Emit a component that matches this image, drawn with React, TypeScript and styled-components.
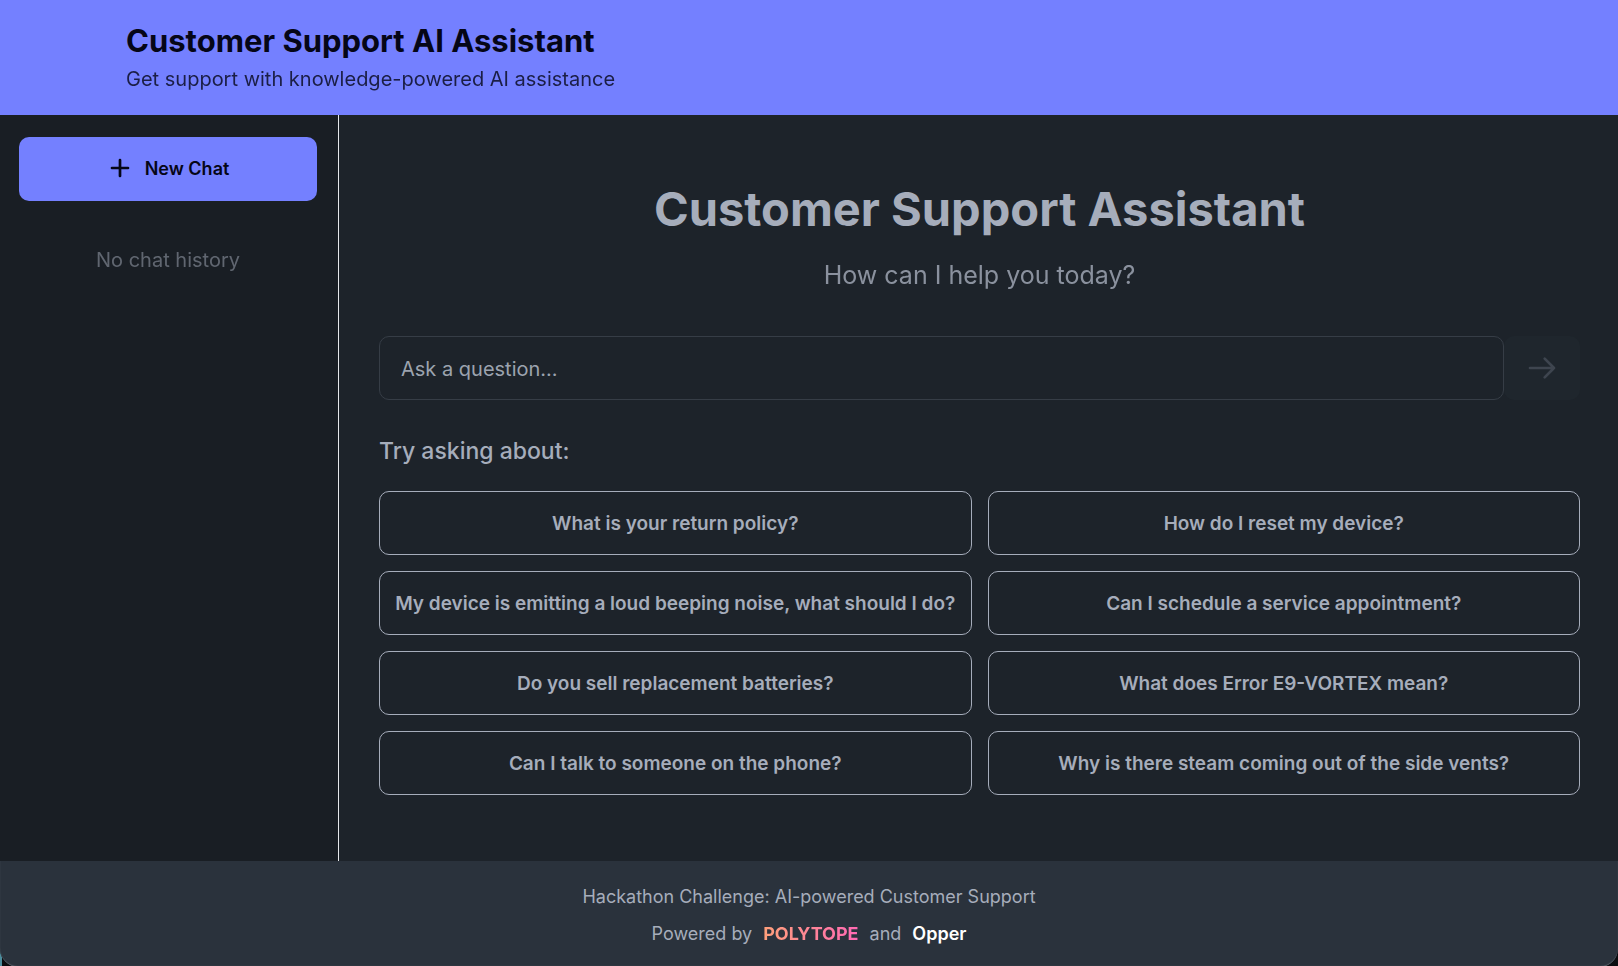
import React, { useState } from "react";
import styled, { createGlobalStyle } from "styled-components";

const GlobalStyle = createGlobalStyle`
  *, *::before, *::after { box-sizing: border-box; }
  html { background: linear-gradient(to right, #4d8c9c 2px, #0b0d10 2px); }
  body {
    margin: 0;
    font-family: Inter, "Liberation Sans", sans-serif;
    color: #a6adbb;
    -webkit-font-smoothing: antialiased;
  }
  h1, h2, h3, p { margin: 0; }
  button, input { font: inherit; color: inherit; }
`;

const Page = styled.div`
  display: flex;
  flex-direction: column;
  min-height: 100vh;
  overflow: hidden;
  border-radius: 0 0 18px 18px;
  background: #1d232a;
`;

const Header = styled.header`
  padding: 20px 126px;
  background: #7480ff;
  color: #050617;
`;

const HeaderTitle = styled.h1`
  font-size: 31px;
  line-height: 42px;
  font-weight: 700;
`;

const HeaderText = styled.p`
  margin-top: 1px;
  font-size: 20px;
  line-height: 32px;
  opacity: 0.8;
`;

const Body = styled.div`
  display: flex;
  flex: 1;
`;

const Sidebar = styled.aside`
  flex: 0 0 339px;
  padding: 22px 21px 22px 19px;
  background: #191e24;
  border-right: 1px solid #e5e7eb;
`;

const NewChatButton = styled.button`
  display: flex;
  align-items: center;
  justify-content: center;
  gap: 12px;
  width: 100%;
  height: 64px;
  padding: 0 8px 2px;
  border: 0;
  border-radius: 10px;
  background: #7480ff;
  color: #050617;
  font-size: 18px;
  font-weight: 600;
  cursor: pointer;
`;

const EmptyHistory = styled.p`
  padding: 43px 0;
  text-align: center;
  font-size: 20px;
  line-height: 32px;
  opacity: 0.5;
`;

const Main = styled.main`
  flex: 1;
  min-width: 0;
  padding: 64px 38px 66px 40px;
`;

const Hero = styled.div`
  text-align: center;
`;

const HeroTitle = styled.h2`
  font-size: 47px;
  line-height: 60px;
  font-weight: 700;
`;

const HeroText = styled.p`
  margin-top: 16px;
  font-size: 25px;
  line-height: 40px;
  opacity: 0.8;
`;

const AskForm = styled.form`
  display: flex;
  margin-top: 41px;
`;

const AskInput = styled.input`
  flex: 1;
  min-width: 0;
  height: 64px;
  padding: 2px 21px 0;
  border: 1px solid #363d46;
  border-radius: 10px;
  background: transparent;
  font-size: 20px;
  &::placeholder { color: #9ca3af; opacity: 1; }
`;

const SendButton = styled.button`
  display: flex;
  align-items: center;
  justify-content: center;
  width: 76px;
  height: 64px;
  border: 0;
  border-radius: 10px;
  background: #1f262d;
  color: #3e454f;
`;

const SuggestTitle = styled.h3`
  margin-top: 32px;
  font-size: 23px;
  line-height: 38px;
  font-weight: 500;
`;

const SuggestGrid = styled.div`
  display: grid;
  grid-template-columns: 1fr 1fr;
  gap: 16px;
  margin-top: 21px;
`;

const SuggestButton = styled.button`
  min-height: 64px;
  padding: 0 12px;
  border: 1px solid #a6adbb;
  border-radius: 10px;
  background: transparent;
  font-size: 19px;
  font-weight: 600;
  cursor: pointer;
`;

const Footer = styled.footer`
  padding: 22px 21px 20px;
  background: #2a323c;
  text-align: center;
  font-size: 18px;
  line-height: 27px;
  border-radius: 0 0 18px 18px;
  box-shadow: inset 0 -1px 1px #59616a;
`;

const Credits = styled.p`
  display: flex;
  justify-content: center;
  gap: 11px;
  margin-top: 10px;
`;

const BrandLink = styled.a<{ $gradient?: boolean }>`
  font-weight: ${(p) => (p.$gradient ? 700 : 600)};
  text-decoration: none;
  color: ${(p) => (p.$gradient ? "transparent" : "#ffffff")};
  background: ${(p) => (p.$gradient ? "linear-gradient(to right, #ffa07a, #ff69b4)" : "none")};
  background-clip: ${(p) => (p.$gradient ? "text" : "border-box")};
`;

const PlusIcon = () => (
  <svg width="26" height="26" viewBox="0 0 26 26" fill="none" stroke="currentColor" strokeWidth="2.7" strokeLinecap="round" aria-hidden="true">
    <path d="M13 5v16M5 13h16" />
  </svg>
);

const ArrowIcon = () => (
  <svg width="32" height="32" viewBox="0 0 24 24" fill="none" stroke="currentColor" strokeWidth="2" strokeLinecap="round" strokeLinejoin="round" aria-hidden="true">
    <path d="M14 5l7 7m0 0l-7 7m7-7H3" />
  </svg>
);

const suggestions = [
  "What is your return policy?",
  "How do I reset my device?",
  "My device is emitting a loud beeping noise, what should I do?",
  "Can I schedule a service appointment?",
  "Do you sell replacement batteries?",
  "What does Error E9-VORTEX mean?",
  "Can I talk to someone on the phone?",
  "Why is there steam coming out of the side vents?",
];

export default function App() {
  const [question, setQuestion] = useState("");
  return (
    <>
      <GlobalStyle />
      <Page>
        <Header>
          <HeaderTitle>Customer Support AI Assistant</HeaderTitle>
          <HeaderText>Get support with knowledge-powered AI assistance</HeaderText>
        </Header>
        <Body>
          <Sidebar>
            <NewChatButton type="button">
              <PlusIcon />
              New Chat
            </NewChatButton>
            <EmptyHistory>No chat history</EmptyHistory>
          </Sidebar>
          <Main>
            <Hero>
              <HeroTitle>Customer Support Assistant</HeroTitle>
              <HeroText>How can I help you today?</HeroText>
            </Hero>
            <AskForm onSubmit={(e) => e.preventDefault()}>
              <AskInput
                type="text"
                aria-label="Ask a question"
                placeholder="Ask a question..."
                value={question}
                onChange={(e) => setQuestion(e.target.value)}
              />
              <SendButton type="submit" aria-label="Send" disabled={!question.trim()}>
                <ArrowIcon />
              </SendButton>
            </AskForm>
            <SuggestTitle>Try asking about:</SuggestTitle>
            <SuggestGrid>
              {suggestions.map((text) => (
                <SuggestButton key={text} type="button" onClick={() => setQuestion(text)}>
                  {text}
                </SuggestButton>
              ))}
            </SuggestGrid>
          </Main>
        </Body>
        <Footer>
          <p>Hackathon Challenge: AI-powered Customer Support</p>
          <Credits>
            <span>Powered by</span>
            <BrandLink href="#polytope" $gradient>POLYTOPE</BrandLink>
            <span>and</span>
            <BrandLink href="#opper">Opper</BrandLink>
          </Credits>
        </Footer>
      </Page>
    </>
  );
}
